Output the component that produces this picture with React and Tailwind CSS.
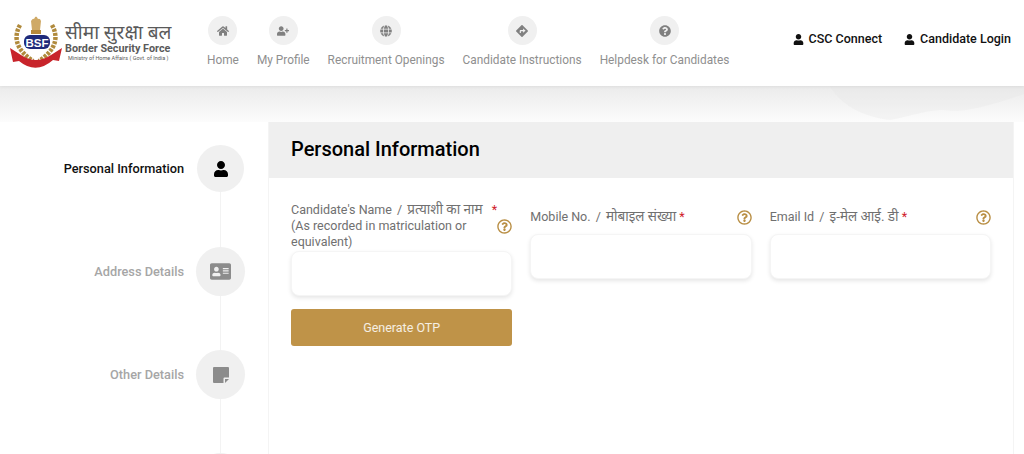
import React from 'react';
import {
    FaHome,
    FaUserPlus,
    FaGlobe,
    FaDirections,
    FaQuestionCircle,
    FaUser,
    FaAddressCard,
    FaRegQuestionCircle,
} from 'react-icons/fa';

const navItems = [
    { label: 'Home', icon: FaHome },
    { label: 'My Profile', icon: FaUserPlus },
    { label: 'Recruitment Openings', icon: FaGlobe },
    { label: 'Candidate Instructions', icon: FaDirections },
    { label: 'Helpdesk for Candidates', icon: FaQuestionCircle },
];

function Logo() {
    return (
        <svg viewBox="0 0 56 60" className="w-[56px] h-[60px] shrink-0">
            {/* capital */}
            <rect x="22" y="18" width="10" height="4" fill="#b8893b" />
            <path d="M23 18 L22 9 Q24 6 25 7 Q27 2 29 7 Q31 6 32 9 L31 18 Z" fill="#cfa966" />
            {/* wreath */}
            <path d="M11 13 Q0 33 24 49" fill="none" stroke="#b08a3c" strokeWidth="4.500" strokeDasharray="3 1.200" />
            <path d="M43 13 Q54 33 30 49" fill="none" stroke="#b08a3c" strokeWidth="4.500" strokeDasharray="3 1.200" />
            {/* ribbon */}
            <path d="M1 36 L12 43 Q27 53 42 43 L53 36 L50 49 L44 48 Q27 63 10 49 L4 50 Z" fill="#c8242b" />
            <rect x="15" y="23" width="26" height="14" rx="6" fill="#1f2a7a" />
            <text x="28" y="34.500" textAnchor="middle" fill="#ffffff" fontSize="11.500" fontWeight="700" fontFamily="Liberation Sans, sans-serif">BSF</text>
        </svg>
    );
}

function NoteIcon() {
    return (
        <svg viewBox="0 0 16 16" className="w-[16px] h-[16px]">
            <path d="M1 0h14a1 1 0 0 1 1 1v9.500h-4.500a1 1 0 0 0-1 1V16H1a1 1 0 0 1-1-1V1a1 1 0 0 1 1-1z M12 12h4l-4 4z" fill="#8c8c8c" />
        </svg>
    );
}

function Field({ label, hindi, className }) {
    return (
        <div className={className}>
            <div className="flex items-center justify-between mb-[9px] text-[12.500px] leading-4 text-[#707070]">
                <div className="h-4">
                    {label} <span className="mx-[2px]">/</span> <span className="text-[13.500px] leading-none">{hindi}</span> <span className="text-[#d0202a]">*</span>
                </div>
                <FaRegQuestionCircle className="text-[15px] text-[#b98f45] shrink-0" />
            </div>
            <input className="block w-full h-[45px] rounded-lg bg-white border border-[#f5f5f5] shadow-[0_2px_4px_rgba(0,0,0,0.1)]" />
        </div>
    );
}

export default function App() {
    return (
        <div className="h-[454px] overflow-hidden bg-white font-['Roboto','Noto_Sans',sans-serif]">
            <header className="relative z-10 h-[86px] bg-white flex shadow-[0_1px_3px_rgba(0,0,0,0.06)]">
                <div className="w-[207px] pl-[9px] pt-[12px] flex">
                    <Logo />
                    <div className="text-[#5a5a5a]">
                        <div className="text-[19px] leading-[18px] mt-[12px] whitespace-nowrap">सीमा सुरक्षा बल</div>
                        <div className="text-[10.800px] leading-[11px] mt-[1px] font-bold whitespace-nowrap">Border Security Force</div>
                        <div className="text-[5.500px] leading-[8px] ml-[3px] whitespace-nowrap">Ministry of Home Affairs ( Govt. of India )</div>
                    </div>
                </div>
                <nav className="flex gap-[18px] pt-[16px]">
                    {navItems.map((item) => (
                        <a key={item.label} className="flex flex-col items-center text-[11.850px] leading-4 text-[#8f8f8f] whitespace-nowrap">
                            <span className="w-[29px] h-[29px] rounded-full bg-[#f0f0f0] flex items-center justify-center mb-[7px]">
                                <item.icon className="text-[12px] text-[#808080]" />
                            </span>
                            {item.label}
                        </a>
                    ))}
                </nav>
                <div className="ml-auto pr-[13px] pt-[31px] flex items-start gap-[22px] text-[12.500px] leading-4 font-medium text-[#111111]">
                    <a className="flex items-center gap-[5px]"><FaUser className="text-[11px]" />CSC Connect</a>
                    <a className="flex items-center gap-[5px]"><FaUser className="text-[11px]" />Candidate Login</a>
                </div>
            </header>

            <div className="relative h-[36px] bg-gradient-to-b from-[#ebebeb] to-[#fcfcfc]">
                {/* faint wave in the backdrop, top right */}
                <svg viewBox="0 0 194 36" className="absolute right-0 top-0 w-[194px] h-[36px]">
                    <path d="M0 0 C10 18 30 30 60 34 C80 30 100 24 110 24 C125 24 130 30 194 8 L194 0 Z" fill="#e4e4e4" fillOpacity="0.3" />
                </svg>
            </div>

            <div className="flex">
                <aside className="w-[268px] pt-[23px] pr-[23px] flex flex-col items-end">
                    <div className="flex items-center gap-[13px] mr-[1px] text-[12.750px] font-medium text-[#111111]">
                        <span className="mt-[1px]">Personal Information</span>
                        <span className="w-[47px] h-[47px] rounded-full bg-[#f0f0f0] flex items-center justify-center">
                            <FaUser className="text-[16px] text-black" />
                        </span>
                    </div>
                    <div className="w-px h-[55px] bg-[#f3f3f3] mr-[24px]" />
                    <div className="flex items-center gap-[12px] text-[12.750px] font-medium text-[#a6a6a6]">
                        <span className="mt-[1px]">Address Details</span>
                        <span className="w-[49px] h-[49px] rounded-full bg-[#f0f0f0] flex items-center justify-center">
                            <FaAddressCard className="text-[21px] text-[#8c8c8c]" />
                        </span>
                    </div>
                    <div className="w-px h-[54px] bg-[#f3f3f3] mr-[24px]" />
                    <div className="flex items-center gap-[12px] text-[12.750px] font-medium text-[#a6a6a6]">
                        <span className="mt-[1px]">Other Details</span>
                        <span className="w-[49px] h-[49px] rounded-full bg-[#f0f0f0] flex items-center justify-center">
                            <NoteIcon />
                        </span>
                    </div>
                    <div className="w-px h-[54px] bg-[#f3f3f3] mr-[24px]" />
                    <span className="w-[49px] h-[49px] rounded-full bg-[#f0f0f0]" />
                </aside>

                <main className="w-[746px] h-[332px] border-x border-[#f4f4f4]">
                    <div className="h-[56px] bg-[#efefef] pl-[22px] pb-[2px] flex items-center text-[20px] font-medium text-black">
                        Personal Information
                    </div>
                    <div className="grid grid-cols-3 gap-[18px] pl-[22px] pr-[22px]">
                        <div className="pt-[24px]">
                            <div className="flex items-center justify-between mb-[1px] text-[12.500px] leading-4 text-[#707070]">
                                <div>
                                    <div className="h-4">
                                        Candidate's Name <span className="mx-[2px]">/</span> <span className="text-[13.500px] leading-none">प्रत्याशी का नाम</span> <span className="text-[#d0202a] ml-[6px]">*</span>
                                    </div>
                                    (As recorded in matriculation or equivalent)
                                </div>
                                <FaRegQuestionCircle className="text-[15px] text-[#b98f45] shrink-0" />
                            </div>
                            <input className="block w-full h-[45px] rounded-lg bg-white border border-[#f5f5f5] shadow-[0_2px_4px_rgba(0,0,0,0.1)]" />
                            <button className="mt-[13px] w-full h-[37px] pt-[1px] rounded-[3px] bg-[#bf9348] text-white/85 text-[12.500px]">
                                Generate OTP
                            </button>
                        </div>
                        <Field className="pt-[31px]" label="Mobile No." hindi="मोबाइल संख्या" />
                        <Field className="pt-[31px]" label="Email Id" hindi="इ-मेल आई. डी" />
                    </div>
                </main>
            </div>
        </div>
    );
}
